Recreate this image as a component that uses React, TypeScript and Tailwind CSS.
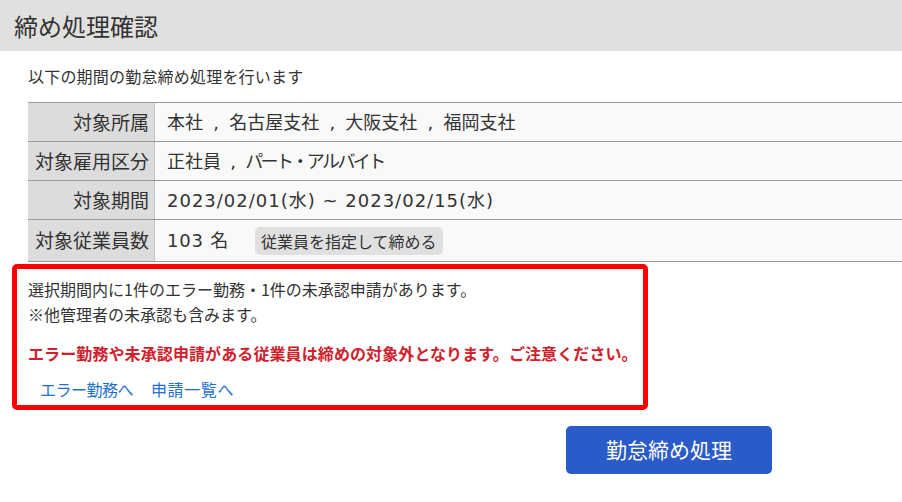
import React from "react";

const font = { fontFamily: '"Noto Sans CJK JP", "Noto Sans", sans-serif' };
// Latin glyphs (digits, commas) come from DejaVu Sans for their wider set
const valueFont = { fontFamily: '"DejaVu Sans", "Noto Sans CJK JP", sans-serif' };

const rows: { label: string; value: React.ReactNode }[] = [
  {
    label: "対象所属",
    value: <span className="[word-spacing:4.5px]">本社 , 名古屋支社 , 大阪支社 , 福岡支社</span>,
  },
  {
    label: "対象雇用区分",
    value: (
      <span className="[word-spacing:3.5px]">
        正社員 , <span className="tracking-[-2.6px]">パート・アルバイト</span>
      </span>
    ),
  },
  {
    label: "対象期間",
    value: <span className="tracking-[1px]">2023/02/01(水) ~ 2023/02/15(水)</span>,
  },
  {
    label: "対象従業員数",
    value: (
      <div className="flex items-center">
        <span className="tracking-[0.8px]">103 名</span>
        <button
          className="ml-[26px] h-[28px] rounded-[5px] bg-[#e0e0e0] px-[6px] text-[16px] leading-[28px] text-[#333]"
          style={font}
        >
          従業員を指定して締める
        </button>
      </div>
    ),
  },
];

export default function App() {
  return (
    <div className="h-[502px] w-[902px] bg-white text-[#333]" style={font}>
      <div className="flex h-[51px] items-center bg-[#e0e0df] pl-[14px] text-[24px] text-[#333]">
        締め処理確認
      </div>

      <div className="pl-[28px] pt-[14px] text-[16px] leading-[22px] tracking-[0.2px]">
        以下の期間の勤怠締め処理を行います
      </div>

      <div className="ml-[28px] mt-[15px] border-t border-[#9a9a9a]">
        {rows.map((r, i) => (
          <div
            key={r.label}
            className={`flex border-b border-[#9a9a9a] ${i === 3 ? "h-[42px]" : "h-[39px]"}`}
          >
            <div className="flex w-[127px] shrink-0 items-center justify-end border-r border-[#c4c4c4] bg-[#dcdcdc] pr-[5px] text-[19px]">
              {r.label}
            </div>
            <div className="flex flex-1 items-center bg-[#f9f9f9] pl-[12px] text-[18px]" style={valueFont}>
              {r.value}
            </div>
          </div>
        ))}
      </div>

      <div className="ml-[12px] mt-[2px] h-[146px] w-[636px] rounded-[5px] border-[5px] border-[#ff0000] pl-[11px] pt-[8px]">
        <div className="whitespace-nowrap text-[16px] leading-[25px]">
          選択期間内に1件のエラー勤務・1件の未承認申請があります。
        </div>
        <div className="whitespace-nowrap text-[16px] leading-[25px]">※他管理者の未承認も含みます。</div>
        <div className="mt-[15px] whitespace-nowrap text-[16px] font-bold leading-[22px] tracking-[0.1px] text-[#d0202c]">
          エラー勤務や未承認申請がある従業員は締めの対象外となります。ご注意ください。
        </div>
        <div className="mt-[14px] flex gap-[18px] pl-[12px] text-[16px] leading-[22px] text-[#1e6fd4]">
          <span className="tracking-[-0.5px]">エラー勤務へ</span>
          <span className="tracking-[0.6px]">申請一覧へ</span>
        </div>
      </div>

      <div className="mt-[16px] flex pl-[566px]">
        <button className="h-[48px] w-[206px] rounded-[5px] bg-[#2a5bc8] text-[21px] text-white">
          勤怠締め処理
        </button>
      </div>
    </div>
  );
}
